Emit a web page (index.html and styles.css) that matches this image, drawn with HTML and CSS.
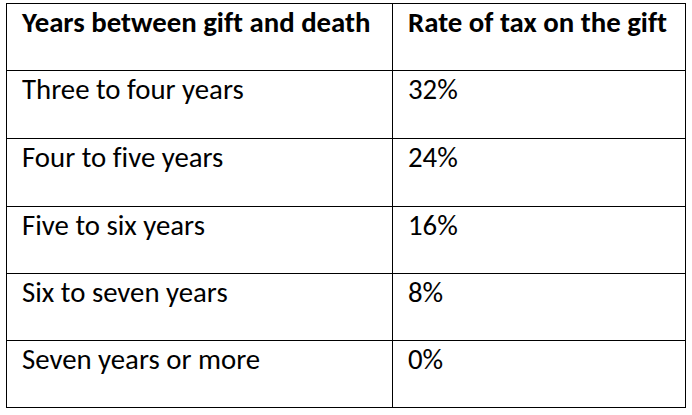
FILE: index.html
```html
<!DOCTYPE html>
<html lang="en">
<head>
<meta charset="utf-8">
<title>Gift tax rates</title>
<link rel="stylesheet" href="styles.css">
</head>
<body>
<div class="table" role="table">
  <div class="cell head" role="columnheader">Years between gift and death</div>
  <div class="cell head" role="columnheader">Rate of tax on the gift</div>
  <div class="cell" role="cell">Three to four years</div>
  <div class="cell" role="cell">32%</div>
  <div class="cell" role="cell">Four to five years</div>
  <div class="cell" role="cell">24%</div>
  <div class="cell" role="cell">Five to six years</div>
  <div class="cell" role="cell">16%</div>
  <div class="cell" role="cell">Six to seven years</div>
  <div class="cell" role="cell">8%</div>
  <div class="cell" role="cell">Seven years or more</div>
  <div class="cell" role="cell">0%</div>
</div>
</body>
</html>
```

FILE: styles.css
```css
html, body {
  margin: 0;
  padding: 0;
  background: #ffffff;
}

body {
  padding: 3px 0 0 6px;
}

.table {
  display: grid;
  grid-template-columns: 385px 292px;
  grid-template-rows: 66px 67px 67px 66px 66px 66px;
  gap: 1px;
  padding: 1px;
  width: max-content;
  background: #000000;
}

.cell {
  background: #ffffff;
  padding: 1px 0 0 15px;
  font-family: Carlito, Lato, "Liberation Sans", sans-serif;
  font-size: 28.8px;
  line-height: 35px;
  font-variant-ligatures: none;
  color: #000000;
}

.head {
  font-weight: bold;
}
```
